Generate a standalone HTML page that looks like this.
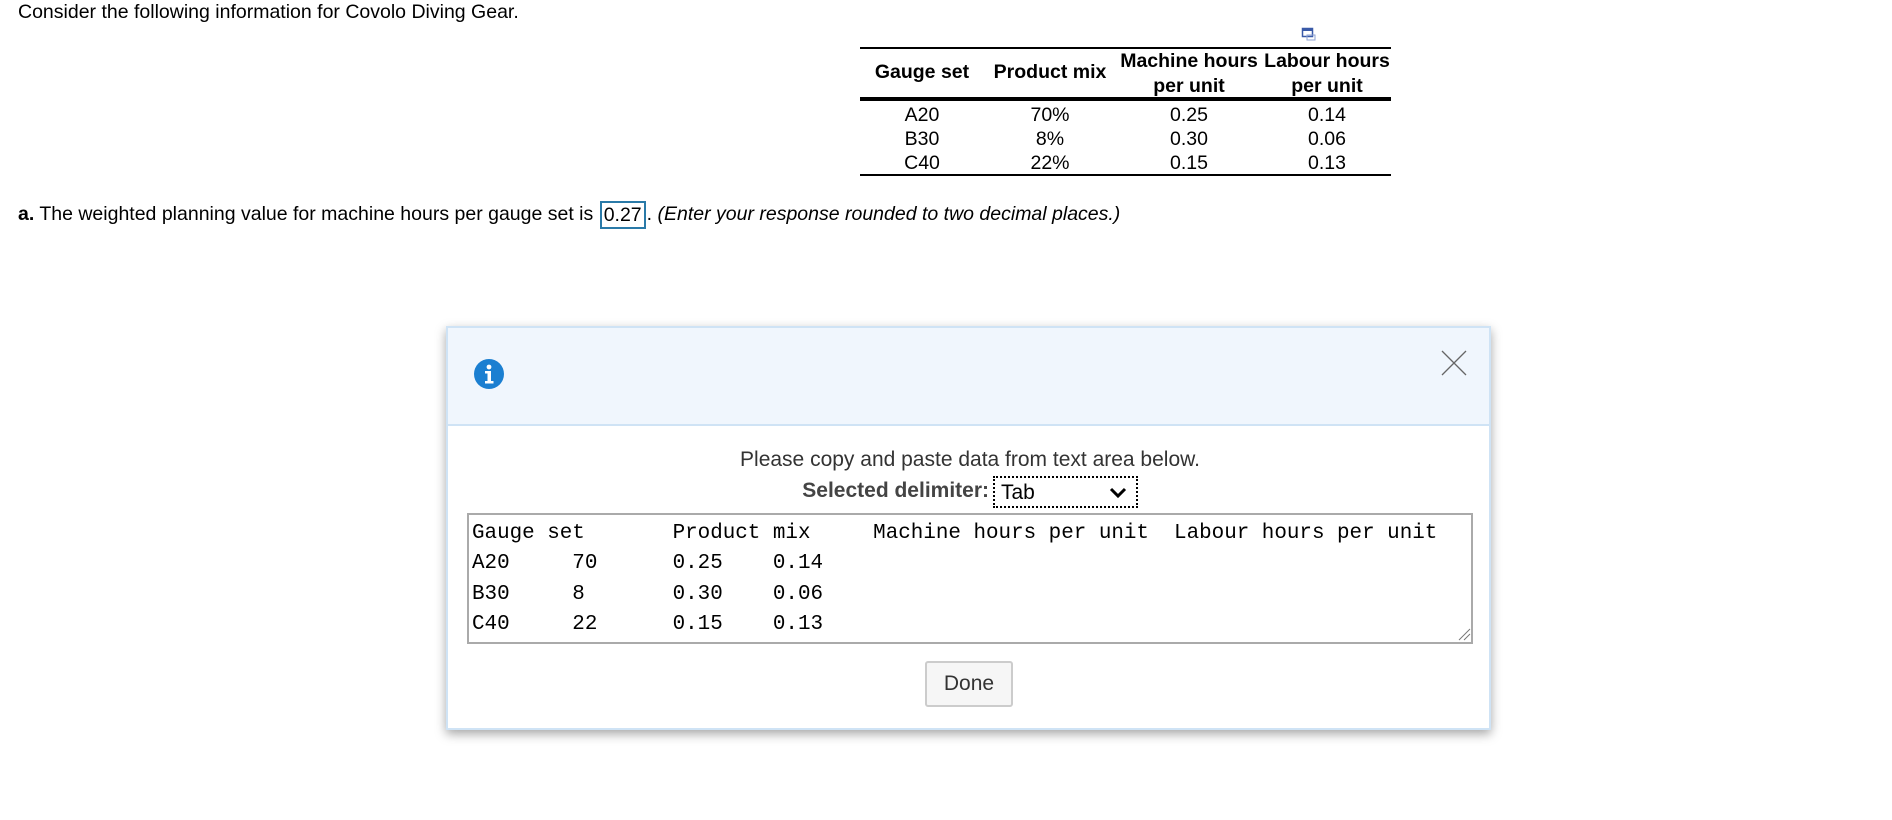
<!DOCTYPE html>
<html><head><meta charset="utf-8"><style>
*{margin:0;padding:0;box-sizing:border-box}
body{width:1892px;height:820px;background:#fff;font-family:"Liberation Sans",Arial,sans-serif;color:#000;position:relative;overflow:hidden;font-size:19.5px}
.a{position:absolute;white-space:nowrap}
.c{position:absolute;text-align:center;white-space:nowrap;transform:translateX(-50%)}
.hr{position:absolute;left:860px;width:531px;background:#000}
pre{font-family:"Liberation Mono",monospace;font-size:20.9px;tab-size:8;-moz-tab-size:8;line-height:30.3px;color:#000}
</style></head><body>
<div class="a" style="left:18px;top:1px">Consider the following information for Covolo Diving Gear.</div>
<svg class="a" style="left:1301px;top:26px" width="16" height="16" viewBox="0 0 16 16"><rect x="1.5" y="2.5" width="10" height="8" fill="#fff" stroke="#3a5aa8" stroke-width="1.5"/><rect x="1.5" y="2.5" width="10" height="2.5" fill="#3a5aa8"/><rect x="6" y="9" width="8" height="5" fill="none" stroke="#8fa3d3" stroke-width="1"/></svg>
<div class="hr" style="top:47px;height:2px"></div>
<div class="hr" style="top:97px;height:4px"></div>
<div class="hr" style="top:174px;height:2px"></div>
<div class="c" style="left:922px;top:61px;font-weight:bold">Gauge set</div>
<div class="c" style="left:1050px;top:61px;font-weight:bold">Product mix</div>
<div class="c" style="left:1189px;top:49px;font-weight:bold;line-height:25px">Machine hours<br>per unit</div>
<div class="c" style="left:1327px;top:49px;font-weight:bold;line-height:25px">Labour hours<br>per unit</div>
<div class="c" style="left:922px;top:103px;line-height:24px">A20<br>B30<br>C40</div>
<div class="c" style="left:1050px;top:103px;line-height:24px">70%<br>8%<br>22%</div>
<div class="c" style="left:1189px;top:103px;line-height:24px">0.25<br>0.30<br>0.15</div>
<div class="c" style="left:1327px;top:103px;line-height:24px">0.14<br>0.06<br>0.13</div>
<div class="a" style="left:18px;top:201px"><b>a.</b> The weighted planning value for machine hours per gauge set is <span style="display:inline-block;border:2px solid #2a7aa8;padding:0 2px;line-height:24px;vertical-align:-1px;margin:0 1px">0.27</span>. <i>(Enter your response rounded to two decimal places.)</i></div>

<div class="a" style="left:446px;top:326px;width:1045px;height:404px;background:#fff;border:2px solid #cfe3f5;box-shadow:0 4px 10px rgba(0,0,0,.35)">
 <div class="a" style="left:0;top:0;width:1041px;height:98px;background:#f0f6fd;border-bottom:2px solid #cfe3f5"></div>
 <svg class="a" style="left:25px;top:30px" width="32" height="32" viewBox="0 0 32 32"><circle cx="16" cy="16" r="15" fill="#1b7fd1"/><circle cx="16" cy="9" r="2.4" fill="#fff"/><path d="M12 13h6v10h2.5v2.5h-8.5v-2.5h2.5v-7.5h-2.5z" fill="#fff"/></svg>
 <svg class="a" style="left:993px;top:22px" width="26" height="26" viewBox="0 0 26 26"><path d="M1 1L25 25M25 1L1 25" stroke="#666" stroke-width="1.3"/></svg>
 <div class="c" style="left:522px;top:120px;color:#333;font-size:21px">Please copy and paste data from text area below.</div>
 <div class="a" style="right:500px;top:151px;color:#444;font-weight:bold;font-size:21px">Selected delimiter:</div>
 <div class="a" style="left:545px;top:148px;width:145px;height:32px;border:2px dotted #000;background:#fff"><span class="a" style="left:6px;top:3px;font-size:21px">Tab</span><svg class="a" style="left:114px;top:9px" width="18" height="12" viewBox="0 0 18 12"><path d="M2 2L9 9L16 2" stroke="#000" stroke-width="3" fill="none"/></svg></div>
 <div class="a" style="left:19px;top:185px;width:1006px;height:131px;border:2px solid #aaa;padding:4px 0 0 3px;overflow:hidden"><pre>Gauge set	Product mix	Machine hours per unit	Labour hours per unit
A20	70	0.25	0.14
B30	8	0.30	0.06
C40	22	0.15	0.13</pre>
 <svg class="a" style="left:988px;top:112px" width="14" height="14"><path d="M2 13L13 2M7 13L13 7" stroke="#777" stroke-width="1"/></svg></div>
 <div class="a" style="left:477px;top:333px;width:88px;height:46px;border:2px solid #ccc;border-radius:3px;background:#f6f6f6;text-align:center;line-height:42px;color:#333;font-size:21px">Done</div>
</div>
</body></html>
